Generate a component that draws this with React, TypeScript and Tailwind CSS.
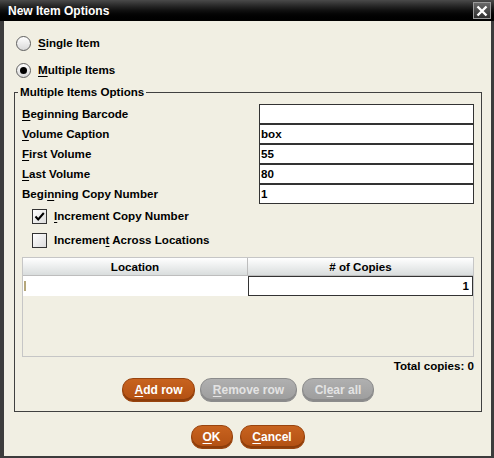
import React from "react";

const fields = [
  { pre: "", key: "B", post: "eginning Barcode", value: "" },
  { pre: "", key: "V", post: "olume Caption", value: "box" },
  { pre: "", key: "F", post: "irst Volume", value: "55" },
  { pre: "", key: "L", post: "ast Volume", value: "80" },
  { pre: "Begi", key: "n", post: "ning Copy Number", value: "1" },
];

function Radio({ checked }: { checked?: boolean }) {
  return (
    <span className="w-[15px] h-[15px] rounded-full border border-[#5f5f5f] bg-gradient-to-b from-white to-[#d9d9d9] flex items-center justify-center shrink-0">
      {checked && <span className="w-[7px] h-[7px] rounded-full bg-black" />}
    </span>
  );
}

function Checkbox({ checked }: { checked?: boolean }) {
  return (
    <span className="w-[15px] h-[15px] border border-[#333] bg-gradient-to-br from-white to-[#dcdcdc] flex items-center justify-center shrink-0">
      {checked && (
        <svg width="13" height="13" viewBox="0 0 13 13">
          <path d="M2.5 6.5 L5.2 9.5 L10.8 3" fill="none" stroke="#000" strokeWidth="2" />
        </svg>
      )}
    </span>
  );
}

function Btn({ w, pre, k, post, disabled }: { w: string; pre?: string; k: string; post: string; disabled?: boolean }) {
  const base = "h-[24px] rounded-[11px] border flex items-center justify-center text-[12px] font-bold shrink-0";
  const look = disabled
    ? "bg-gradient-to-b from-[#b0b0b0] to-[#9c9c9c] border-[#8c8c8c] text-[#e3e3e3] shadow-[inset_0_-2px_0_#8a8a8a]"
    : "bg-gradient-to-b from-[#c8631f] to-[#b14f12] border-[#98440f] text-white shadow-[inset_0_-2px_0_#8c3d0b]";
  return (
    <button className={`${base} ${look} ${w}`}>
      {pre}
      <span className="underline underline-offset-2">{k}</span>
      {post}
    </button>
  );
}

export default function App() {
  return (
    <div className="w-[494px] h-[458px] flex flex-col font-['Liberation_Sans',Arial,sans-serif] text-[11.6px] font-bold text-black leading-none">
      {/* title bar */}
      <div className="h-[21px] bg-gradient-to-b from-[#4a4a4a] via-[#101010] to-black flex items-center justify-between pl-[8px] pr-[3px]">
        <span className="text-white text-[12px]">New Item Options</span>
        <span className="w-[18px] h-[17px] border border-[#9a9a9a] bg-gradient-to-b from-[#6a6a6a] to-[#2e2e2e] flex items-center justify-center">
          <svg width="12" height="12" viewBox="0 0 12 12">
            <path d="M1.5 1.5 L10.5 10.5 M10.5 1.5 L1.5 10.5" stroke="#fff" strokeWidth="2.4" />
          </svg>
        </span>
      </div>

      {/* body */}
      <div className="flex-1 flex flex-col bg-[#f1efe3] border-l-4 border-r-[3px] border-b-2 border-[#3c3c3c] pt-[12px]">
        <label className="h-[20px] flex items-center pl-[12px] gap-[7px]">
          <Radio />
          <span>
            <span className="underline underline-offset-2">S</span>ingle Item
          </span>
        </label>
        <label className="h-[20px] mt-[7px] flex items-center pl-[12px] gap-[7px]">
          <Radio checked />
          <span>
            <span className="underline underline-offset-2">M</span>ultiple Items
          </span>
        </label>

        <fieldset className="mt-[5px] ml-[10px] mr-[9px] border border-[#404040] px-[7px] pt-[5px] pb-[9px]">
          <legend className="-ml-[4px] px-[2px] leading-[14px]">Multiple Items Options</legend>

          <div className="flex flex-col">
            {fields.map((f) => (
              <div key={f.post} className="h-[20px] flex items-center justify-between">
                <span>
                  {f.pre}
                  <span className="underline underline-offset-2">{f.key}</span>
                  {f.post}
                </span>
                <div className="w-[215px] h-[20px] bg-white border border-[#333] flex items-center pl-[1px]">
                  {f.value}
                </div>
              </div>
            ))}
          </div>

          <label className="h-[24px] flex items-center pl-[10px] gap-[7px]">
            <Checkbox checked />
            <span>
              <span className="underline underline-offset-2">I</span>ncrement Copy Number
            </span>
          </label>
          <label className="h-[24px] flex items-center pl-[10px] gap-[7px]">
            <Checkbox />
            <span>
              Incremen<span className="underline underline-offset-2">t</span> Across Locations
            </span>
          </label>

          {/* table */}
          <div className="mt-[5px] h-[100px] border border-[#c6c6c6] bg-[#f1efe3] flex flex-col">
            <div className="h-[18px] grid grid-cols-[225px_1fr] bg-gradient-to-b from-white to-[#d9dddd] border-b border-[#bdbdbd]">
              <div className="flex items-center justify-center border-r border-[#bdbdbd]">Location</div>
              <div className="flex items-center justify-center">
                # of Copies
              </div>
            </div>
            <div className="h-[20px] grid grid-cols-[225px_1fr] bg-white">
              <div className="flex items-center pl-[1px]">
                <span className="w-[2px] h-[10px] bg-[#b5a77a]" />
              </div>
              <div className="flex items-center justify-end pr-[3px] border border-[#333]">1</div>
            </div>
          </div>

          <div className="h-[16px] mt-[1px] flex items-center justify-end">Total copies: 0</div>

          <div className="mt-[4px] flex justify-center gap-[5px]">
            <Btn w="w-[73px]" k="A" post="dd row" />
            <Btn w="w-[97px]" k="R" post="emove row" disabled />
            <Btn w="w-[72px]" pre="Cl" k="e" post="ar all" disabled />
          </div>
        </fieldset>

        <div className="mt-[13px] flex justify-center gap-[7px]">
          <Btn w="w-[42px]" k="O" post="K" />
          <Btn w="w-[65px]" k="C" post="ancel" />
        </div>
      </div>
    </div>
  );
}
